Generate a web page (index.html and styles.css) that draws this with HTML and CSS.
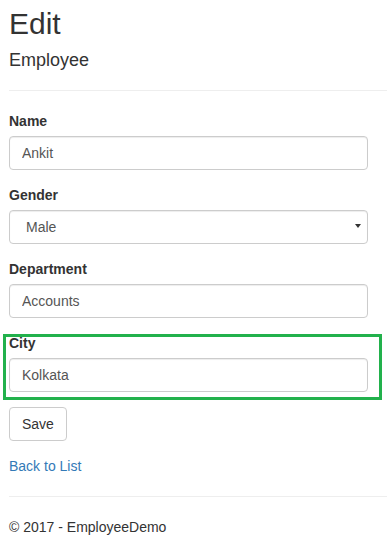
FILE: index.html
```html
<!DOCTYPE html>
<html>
<head>
<meta charset="utf-8">
<title>Edit - EmployeeDemo</title>
<link rel="stylesheet" href="styles.css">
</head>
<body>
<div class="container">
  <h2 class="title">Edit</h2>
  <h4 class="subtitle">Employee</h4>
  <hr class="rule">
  <form class="form">
    <div class="form-group">
      <label class="control-label">Name</label>
      <input class="form-control" type="text" value="Ankit">
    </div>
    <div class="form-group">
      <label class="control-label">Gender</label>
      <div class="select-wrap">
        <select class="form-control select">
          <option>Male</option>
          <option>Female</option>
        </select>
      </div>
    </div>
    <div class="form-group">
      <label class="control-label">Department</label>
      <input class="form-control" type="text" value="Accounts">
    </div>
    <div class="form-group highlight">
      <label class="control-label">City</label>
      <input class="form-control" type="text" value="Kolkata">
    </div>
    <div class="form-group">
      <button type="button" class="btn">Save</button>
    </div>
  </form>
  <div class="back"><a href="#" class="link">Back to List</a></div>
  <hr class="rule">
  <footer class="footer"><p class="copy">© 2017 - EmployeeDemo</p></footer>
</div>
</body>
</html>
```
FILE: styles.css
```css
* { box-sizing: border-box; }
html, body { margin: 0; padding: 0; background: #fff; }
body {
  font-family: "Liberation Sans", Arial, Helvetica, sans-serif;
  font-size: 14px;
  line-height: 20px;
  color: #333;
}
.container { padding: 0 0 0 9px; }
.title {
  font-size: 30px;
  font-weight: 500;
  line-height: 33px;
  margin: 7px 0 10px;
}
.subtitle {
  font-size: 18px;
  font-weight: 500;
  line-height: 20px;
  margin: 10px 0 10px;
}
.rule {
  border: 0;
  border-top: 1px solid #eee;
  margin: 20px 0;
  height: 0;
}
.form { width: 359px; margin: 0; }
.form-group { margin-bottom: 15px; }
.control-label {
  display: block;
  font-weight: 700;
  margin-bottom: 5px;
  line-height: 20px;
}
.form-control {
  display: block;
  width: 100%;
  height: 34px;
  padding: 6px 12px;
  font-family: inherit;
  font-size: 14px;
  line-height: 20px;
  color: #555;
  background: #fff;
  border: 1px solid #ccc;
  border-radius: 4px;
  box-shadow: inset 0 1px 1px rgba(0,0,0,.075);
  margin: 0;
}
.select-wrap { position: relative; }
.select {
  -webkit-appearance: none;
  appearance: none;
  padding-left: 16px;
}
.select-wrap::after {
  content: "";
  position: absolute;
  right: 7px;
  top: 14px;
  width: 0;
  height: 0;
  border-left: 3px solid transparent;
  border-right: 3px solid transparent;
  border-top: 4px solid #333;
  pointer-events: none;
}
.highlight { position: relative; }
.highlight::before {
  content: "";
  position: absolute;
  top: 1px;
  left: -6px;
  right: -14px;
  bottom: -8px;
  border: 3px solid #22b14c;
  pointer-events: none;
}
.btn {
  display: inline-block;
  height: 34px;
  padding: 6px 12px;
  font-family: inherit;
  font-size: 14px;
  line-height: 20px;
  color: #333;
  background: #fff;
  border: 1px solid #ccc;
  border-radius: 4px;
  margin: 0;
}
.back { line-height: 20px; }
.link { color: #337ab7; text-decoration: none; }
.footer { margin: 0; }
.copy { margin: 0 0 10px; }
```
